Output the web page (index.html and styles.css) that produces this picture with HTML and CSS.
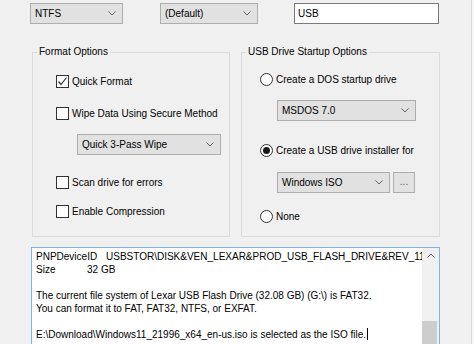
FILE: index.html
```html
<!DOCTYPE html>
<html>
<head>
<meta charset="utf-8">
<title>Format</title>
<link rel="stylesheet" href="styles.css">
</head>
<body>
<div class="win">
  <div class="toprow">
    <div class="combo c-fs"><span class="ctext">NTFS</span><svg class="chev" width="8" height="5" viewBox="0 0 8 5"><polyline points="0.5,0.5 4,4 7.5,0.5"/></svg></div>
    <div class="combo c-cl"><span class="ctext">(Default)</span><svg class="chev" width="8" height="5" viewBox="0 0 8 5"><polyline points="0.5,0.5 4,4 7.5,0.5"/></svg></div>
    <div class="textbox">USB</div>
  </div>

  <div class="groups">
    <fieldset class="group g-left">
      <legend>Format Options</legend>
      <div class="gbody">
        <div class="opt m-q"><span class="box"><svg width="11" height="11" viewBox="0 0 11 11"><polyline points="1.5,5.5 4,8.5 9.5,1.5"/></svg></span>Quick Format</div>
        <div class="opt m-w"><span class="box"></span>Wipe Data Using Secure Method</div>
        <div class="combo c-wipe"><span class="ctext">Quick 3-Pass Wipe</span><svg class="chev" width="8" height="5" viewBox="0 0 8 5"><polyline points="0.5,0.5 4,4 7.5,0.5"/></svg></div>
        <div class="opt m-s"><span class="box"></span>Scan drive for errors</div>
        <div class="opt m-e"><span class="box"></span>Enable Compression</div>
      </div>
    </fieldset>

    <fieldset class="group g-right">
      <legend>USB Drive Startup Options</legend>
      <div class="gbody rbody">
        <div class="opt m-r1"><span class="radio"></span>Create a DOS startup drive</div>
        <div class="combo c-dos"><span class="ctext">MSDOS 7.0</span><svg class="chev" width="8" height="5" viewBox="0 0 8 5"><polyline points="0.5,0.5 4,4 7.5,0.5"/></svg></div>
        <div class="opt m-r2"><span class="radio on"><span class="dot"></span></span>Create a USB drive installer for</div>
        <div class="isorow">
          <div class="combo c-iso"><span class="ctext">Windows ISO</span><svg class="chev" width="8" height="5" viewBox="0 0 8 5"><polyline points="0.5,0.5 4,4 7.5,0.5"/></svg></div>
          <div class="btn">...</div>
        </div>
        <div class="opt m-r3"><span class="radio"></span>None</div>
      </div>
    </fieldset>
  </div>

  <div class="log">
    <div class="logtext">
      <div class="line"><span class="k1">PNPDeviceID</span>USBSTOR\DISK&amp;VEN_LEXAR&amp;PROD_USB_FLASH_DRIVE&amp;REV_1100</div>
      <div class="line"><span class="k2">Size</span>32 GB</div>
      <div class="line"> </div>
      <div class="line">The current file system of Lexar USB Flash Drive (32.08 GB) (G:\) is FAT32.</div>
      <div class="line">You can format it to FAT, FAT32, NTFS, or EXFAT.</div>
      <div class="line"> </div>
      <div class="line">E:\Download\Windows11_21996_x64_en-us.iso is selected as the ISO file.<span class="caret"></span></div>
    </div>
    <div class="sbar">
      <div class="sarrow"><svg width="8" height="5" viewBox="0 0 8 5"><polyline points="0.5,4.5 4,1 7.5,4.5"/></svg></div>
      <div class="strack"></div>
      <div class="sthumb"></div>
    </div>
  </div>
</div>
</body>
</html>
```

FILE: styles.css
```css
html, body {
  margin: 0;
  padding: 0;
}
body {
  width: 474px;
  height: 344px;
  overflow: hidden;
  background: #f7f7f7;
  font-family: "Liberation Sans", Arial, sans-serif;
  font-size: 10px;
  color: #000;
}
.win {
  width: 471px;
  height: 344px;
  background: #f0f0f0;
  border-right: 1px solid #dadada;
  overflow: hidden;
}

/* top row */
.toprow {
  display: flex;
  padding: 3px 0 0 30px;
  height: 21px;
}
.combo {
  box-sizing: border-box;
  height: 21px;
  background: #e1e1e1;
  border: 1px solid #adadad;
  display: flex;
  align-items: center;
  justify-content: space-between;
  padding: 0 6px 0 4px;
}
.chev polyline, .sarrow polyline {
  fill: none;
  stroke: #606060;
  stroke-width: 1;
}
.c-fs { width: 93px; }
.c-cl { width: 98px; margin-left: 37px; }
.textbox {
  box-sizing: border-box;
  width: 145px;
  height: 21px;
  margin-left: 36px;
  background: #fff;
  border: 1px solid #7a7a7a;
  padding-left: 3px;
  display: flex;
  align-items: center;
}

/* groups */
.groups {
  display: flex;
  margin-top: 22px;
  padding-left: 32px;
}
.group {
  margin: 0;
  padding: 0;
  min-width: 0;
  border: 1px solid #dcdcdc;
  box-sizing: border-box;
}
.group legend {
  padding: 0 2px;
  margin-left: 4px;
  line-height: 12px;
  font-size: 10px;
}
.g-left { width: 198px; }
.g-right { width: 199px; margin-left: 11px; }
.gbody {
  display: flex;
  flex-direction: column;
  align-items: flex-start;
  padding: 0 0 13px 23px;
}
.rbody { padding-left: 18px; }

.opt {
  display: flex;
  align-items: center;
  height: 13px;
  gap: 3px;
  white-space: nowrap;
}
.box {
  box-sizing: border-box;
  width: 13px;
  height: 13px;
  border: 1px solid #333;
  background: #fff;
  display: flex;
  align-items: center;
  justify-content: center;
}
.box polyline {
  fill: none;
  stroke: #333;
  stroke-width: 1.2;
}
.radio {
  box-sizing: border-box;
  width: 13px;
  height: 13px;
  border: 1px solid #333;
  border-radius: 50%;
  background: #fff;
  display: flex;
  align-items: center;
  justify-content: center;
}
.dot {
  width: 7px;
  height: 7px;
  border-radius: 50%;
  background: #1a1a1a;
}

.m-q { margin-top: 17px; }
.m-w { margin-top: 19px; }
.c-wipe { width: 144px; margin-top: 14px; margin-left: 21px; }
.m-s { margin-top: 21px; }
.m-e { margin-top: 16px; }

.m-r1 { margin-top: 15px; }
.c-dos { width: 139px; margin-top: 14px; margin-left: 17px; }
.m-r2 { margin-top: 23px; }
.isorow {
  display: flex;
  align-items: center;
  margin-top: 14px;
  margin-left: 17px;
  height: 22px;
}
.c-iso { width: 113px; }
.btn {
  box-sizing: border-box;
  width: 22px;
  height: 21px;
  margin-left: 3px;
  background: #e1e1e1;
  border: 1px solid #adadad;
  display: flex;
  align-items: center;
  justify-content: center;
  color: #555;
  line-height: 10px;
}
.m-r3 { margin-top: 17px; }

/* log area */
.log {
  box-sizing: border-box;
  margin: 10px 0 0 31px;
  width: 409px;
  height: 110px;
  border: 1px solid #7eb4ea;
  background: #fff;
  display: flex;
}
.logtext {
  flex: 1;
  min-width: 0;
  overflow: hidden;
  padding: 2px 0 0 4px;
}
.line {
  height: 13px;
  line-height: 13px;
  white-space: pre;
}
.k1 { display: inline-block; width: 70px; }
.k2 { display: inline-block; width: 51px; }
.caret {
  display: inline-block;
  width: 1px;
  height: 12px;
  background: #000;
  vertical-align: -2px;
  margin-left: 1px;
}
.sbar {
  width: 17px;
  background: #f0f0f0;
  display: flex;
  flex-direction: column;
}
.sarrow {
  height: 17px;
  display: flex;
  align-items: center;
  justify-content: center;
}
.strack { height: 66px; }
.sthumb {
  height: 40px;
  margin: 0 2px 0 0;
  background: #cdcdcd;
}
```
